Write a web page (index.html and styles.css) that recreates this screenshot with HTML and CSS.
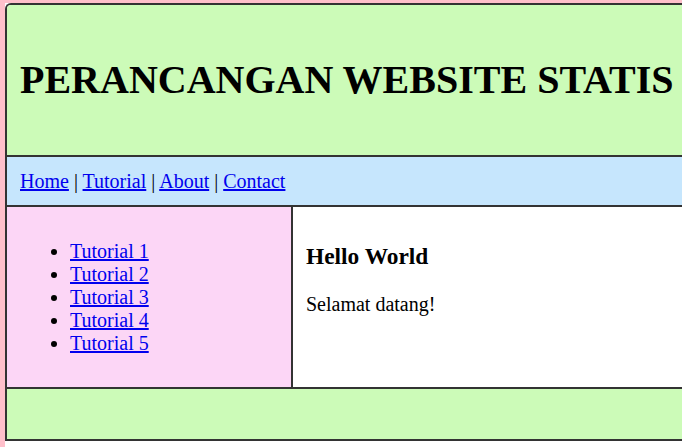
FILE: index.html
```html
<!DOCTYPE html>
<html>
<head>
<meta charset="utf-8">
<title>Perancangan Website Statis</title>
<link rel="stylesheet" href="styles.css">
</head>
<body>
<div class="wrap">
  <header class="header"><h1 class="title">PERANCANGAN WEBSITE STATIS</h1></header>
  <nav class="nav"><a href="#">Home</a> | <a href="#">Tutorial</a> | <a href="#">About</a> | <a href="#">Contact</a></nav>
  <div class="main">
    <aside class="sidebar">
      <ul class="menu">
        <li><a href="#">Tutorial 1</a></li>
        <li><a href="#">Tutorial 2</a></li>
        <li><a href="#">Tutorial 3</a></li>
        <li><a href="#">Tutorial 4</a></li>
        <li><a href="#">Tutorial 5</a></li>
      </ul>
    </aside>
    <section class="content">
      <h3 class="heading">Hello World</h3>
      <p class="text">Selamat datang!</p>
    </section>
  </div>
  <footer class="footer"></footer>
</div>
</body>
</html>
```
FILE: styles.css
```css
html {
  background: #ffffff;
  overflow: hidden;
}
body {
  margin: 0;
  padding-top: 3px;
  min-height: 100vh;
  box-sizing: border-box;
  border-left: 5px solid #ffc0cb;
  background: linear-gradient(#ffc0cb, #ffc0cb) top left / 100% 3px no-repeat, #ffffff;
  font-family: "Liberation Serif", "Times New Roman", serif;
  font-size: 20px;
  color: #000;
}
a { color: #0000ee; }
.wrap {
  width: 780px;
  border-top: 2px solid #333;
  border-left: 2px solid #333;
  border-top-left-radius: 6px;
  overflow: hidden;
}
.header {
  height: 150px;
  background: #ccfbb8;
  display: flex;
  align-items: center;
  padding: 0 13px;
  border-bottom: 2px solid #333;
}
.title {
  margin: 0;
  font-size: 40px;
  font-weight: bold;
  line-height: 46px;
  white-space: nowrap;
}
.nav {
  height: 48px;
  padding: 13px 13px 12px;
  box-sizing: border-box;
  line-height: 23px;
  background: #c6e6fd;
}
.main {
  display: flex;
  border-top: 2px solid #333;
  border-bottom: 2px solid #333;
}
.sidebar {
  width: 286px;
  box-sizing: border-box;
  flex: none;
  background: #fcd6f6;
  border-right: 2px solid #333;
  padding: 12.5px 13px;
}
.menu {
  margin: 20px 0;
  padding-left: 50px;
  line-height: 23px;
}
.content {
  flex: 1;
  background: #fff;
  padding: 12.5px 13px;
}
.heading {
  margin: 23.4px 0;
  font-size: 23.4px;
  line-height: 27px;
}
.text {
  margin: 20px 0;
  line-height: 23px;
}
.footer {
  height: 50px;
  background: #ccfbb8;
  border-bottom: 2px solid #333;
}
```
